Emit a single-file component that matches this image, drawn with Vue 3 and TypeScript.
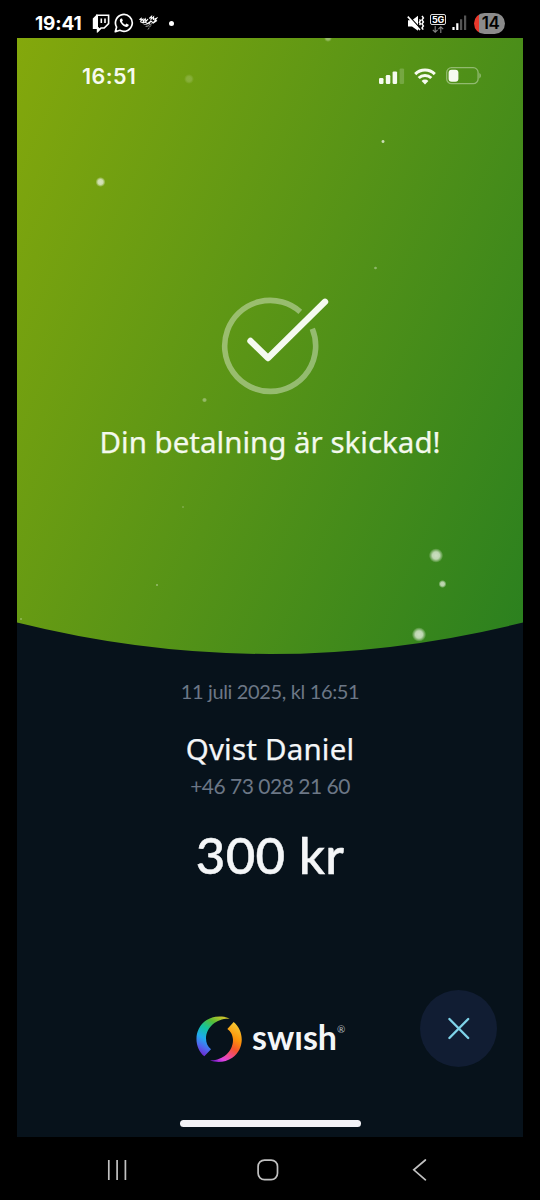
<script setup lang="ts">
interface Spark {
  x: number
  y: number
  r: number
  o: number
}

const sparks: Spark[] = [
  { x: 311, y: 0, r: 4, o: 0.4 },
  { x: 172, y: 41, r: 5, o: 0.2 },
  { x: 366, y: 103.5, r: 2, o: 0.8 },
  { x: 83.5, y: 144, r: 5, o: 0.8 },
  { x: 358.5, y: 230, r: 1.8, o: 0.4 },
  { x: 187.5, y: 362, r: 2.6, o: 0.4 },
  { x: 166, y: 469, r: 1.4, o: 0.2 },
  { x: 140, y: 547, r: 1.5, o: 0.35 },
  { x: 419, y: 517.5, r: 7.2, o: 0.8 },
  { x: 425.5, y: 546, r: 4, o: 0.75 },
  { x: 402, y: 596.5, r: 7.2, o: 0.8 },
  { x: 4, y: 581, r: 1.3, o: 0.3 },
]

const payment = {
  title: 'Din betalning är skickad!',
  date: '11 juli 2025, kl 16:51',
  name: 'Qvist Daniel',
  phone: '+46 73 028 21 60',
  amount: '300 kr',
}
</script>

<template>
  <div class="phone">
    <header class="device-bar">
      <span class="device-time">19:41</span>
      <svg class="twitch" width="18" height="19" viewBox="0 0 18 19" fill="none">
        <path d="M4.8 1.2H16.6V9.6L12.2 14H9L6 17V14H4.8Z" stroke="#fff" stroke-width="1.6" />
        <path d="M4.8 .5L.8 4.4V15H4.8V18.8L8.8 15L6 13.2V1Z" fill="#fff" />
        <path d="M9.3 4.4V9M13 4.4V9" stroke="#fff" stroke-width="1.6" />
      </svg>
      <svg class="whatsapp" width="20" height="20" viewBox="0 0 20 20" fill="none">
        <path d="M1.3 18.7L2.6 14.1A8.4 8.4 0 1 1 5.9 17.3Z" stroke="#fff" stroke-width="1.7" stroke-linejoin="round" />
        <path d="M7 5.4C5.4 6.2 5.6 8.2 6.7 9.8C8.3 12.2 10.2 13.8 12.2 14C13.7 14.1 14.8 13 14.7 11.7L12.5 10.5L11.3 11.8C9.8 11.2 8.8 10.2 8 8.8L8.9 7.6L8 5.5Z" fill="#fff" />
      </svg>
      <svg class="doodle" width="19" height="16" viewBox="0 0 19 16" fill="none" stroke="#fff" stroke-width="1.1" stroke-linecap="round">
        <path d="M.8 4.5L2.2 3.4L2 5.7L4 4L4.3 6.6L6.2 3.8L7 6.4L8.7 4.4M1.5 6.8L4.2 8L6 7L8.4 8.6L11.5 6.5M10.5 3.2L12.5 1.4L12 4.2L14.6 1.8L14.4 4.5L17.6 3.2L15.5 6.2L18 5.6L14.2 8L12 6L10 8.6" />
        <path d="M5 9.4L8 9.6M9.5 10.2L13 8.6M7 11.4L9.2 11M10.4 12.2L11.8 10.6M9.2 14.2L9.8 13.4" stroke="#aaa" stroke-width=".9" />
      </svg>
      <span class="more-dot"></span>
      <svg class="mute" width="18" height="17" viewBox="0 0 18 17">
        <path d="M1 5.2H5L11 .8V15.8L5 11.5H1Z" fill="#fff" />
        <path d="M1.6 .6L13.6 13.8" stroke="#000" stroke-width="1.3" />
        <path d="M.8 1.6L13 15" stroke="#fff" stroke-width="1.6" />
        <path d="M12.4 4.4L13.4 5.6L12.4 7.2L13.4 8.8L12.6 10.2M15 1L16.4 2.9L15 4.9L16.4 6.9L15 8.9L16.4 10.9L15 12.9L16.2 14.6" fill="none" stroke="#fff" stroke-width="1.5" />
      </svg>
      <span class="network">
        <span class="network-label">5G</span>
        <svg width="12" height="7" viewBox="0 0 12 7" fill="none" stroke="#858585" stroke-width="1.1">
          <path d="M3.2 0V6M.8 3.8L3.2 6.2L5.6 3.8M8.8 7V1M6.4 3.2L8.8 .8L11.2 3.2" />
        </svg>
      </span>
      <svg class="device-signal" width="15" height="16" viewBox="0 0 15 16">
        <path d="M.4 12H2.6V15H.4ZM4.2 8.2H6.4V15H4.2Z" fill="#fff" />
        <path d="M8 4.2H10.2V15H8ZM12 .4H14.2V15H12Z" fill="#555" />
      </svg>
      <span class="charge"><span class="charge-text">14</span></span>
    </header>

    <main class="screen">
      <section class="hero">
        <svg class="sparks" width="506" height="616" viewBox="0 0 506 616">
          <defs>
            <radialGradient id="spark">
              <stop offset="0" stop-color="#f1f5eb" />
              <stop offset=".5" stop-color="#f1f5eb" stop-opacity=".9" />
              <stop offset="1" stop-color="#f1f5eb" stop-opacity="0" />
            </radialGradient>
          </defs>
          <circle v-for="(s, i) in sparks" :key="i" :cx="s.x" :cy="s.y" :r="s.r" :opacity="s.o" fill="url(#spark)" />
        </svg>
        <div class="ios-bar">
          <span class="ios-time">16:51</span>
          <svg class="ios-signal" width="26" height="16" viewBox="0 0 26 16" fill="#f6faef">
            <rect x="0" y="10" width="4.5" height="6" rx="1.2" />
            <rect x="6.8" y="7" width="4.5" height="9" rx="1.2" />
            <rect x="13.6" y="3.4" width="4.5" height="12.6" rx="1.2" />
            <rect x="20.6" y=".4" width="4.5" height="15.6" rx="1.2" opacity=".2" />
          </svg>
          <svg class="wifi" width="22" height="17" viewBox="0 0 22 17" fill="none" stroke="#f6faef" stroke-width="3">
            <path d="M1.2 6.1A14 14 0 0 1 20.8 6.1" />
            <path d="M4.7 10A9 9 0 0 1 17.3 10" />
            <path d="M11 16.4L7.6 13A4.8 4.8 0 0 1 14.4 13Z" fill="#f6faef" stroke="none" />
          </svg>
          <svg class="ios-battery" width="36" height="18" viewBox="0 0 36 18">
            <rect x=".7" y=".7" width="31.4" height="16" rx="4.8" fill="none" stroke="#fff" stroke-opacity=".38" stroke-width="1.3" />
            <rect x="2.6" y="2.7" width="9.8" height="12" rx="3" fill="#f6faef" />
            <path d="M33.4 6C35.3 6.9 35.3 10.5 33.4 11.4Z" fill="#fff" opacity=".42" />
          </svg>
        </div>
        <svg class="check" width="120" height="100" viewBox="0 0 120 100" fill="none">
          <path d="M102.3 32.7A45.5 45.5 0 1 1 90.3 15.8" stroke="#fff" stroke-opacity=".38" stroke-width="5.6" />
          <path d="M40.5 45L58 62L115 5.8" stroke="#f5faf0" stroke-width="6.4" stroke-linecap="round" stroke-linejoin="round" />
        </svg>
        <h1 class="title">{{ payment.title }}</h1>
      </section>

      <section class="details">
        <p class="date">{{ payment.date }}</p>
        <h2 class="name">{{ payment.name }}</h2>
        <p class="number">{{ payment.phone }}</p>
        <p class="amount">{{ payment.amount }}</p>
      </section>

      <footer class="footer">
        <div class="brand">
          <svg width="46" height="47" viewBox="46 49 138 141">
            <defs>
              <linearGradient id="cool" x1=".75" y1="0" x2=".25" y2="1">
                <stop offset="0" stop-color="#c8c42c" />
                <stop offset=".2" stop-color="#58bd35" />
                <stop offset=".42" stop-color="#12c3a0" />
                <stop offset=".65" stop-color="#20a9ee" />
                <stop offset=".84" stop-color="#5065ed" />
                <stop offset="1" stop-color="#6c2bd0" />
              </linearGradient>
              <linearGradient id="warm" x1=".7" y1="0" x2=".2" y2="1">
                <stop offset="0" stop-color="#f6c630" />
                <stop offset=".3" stop-color="#fb930a" />
                <stop offset=".52" stop-color="#f5542b" />
                <stop offset=".72" stop-color="#f04a92" />
                <stop offset=".88" stop-color="#dd44e3" />
                <stop offset="1" stop-color="#8220c8" />
              </linearGradient>
            </defs>
            <path d="M71 170C38 142 39 86 78 61C100 48 128 48 147 57C110 55 77 80 76 116C76 130 81 141 91 149Z" fill="url(#cool)" />
            <path d="M159 67C192 95 192 148 155 174C135 188 108 190 88 182C122 184 157 158 157 121C157 107 150 95 140 88Z" fill="url(#warm)" />
          </svg>
          <span class="wordmark">swısh</span>
          <span class="registered">®</span>
        </div>
        <button class="close" aria-label="Stäng">
          <svg width="24" height="24" viewBox="0 0 24 24" fill="none" stroke="#7fd3e9" stroke-width="2.4" stroke-linecap="round">
            <path d="M2.4 2L21.2 21M21.2 2L2.4 21" />
          </svg>
        </button>
      </footer>
      <div class="home-indicator"></div>
    </main>

    <nav class="nav">
      <svg width="20" height="22" viewBox="0 0 20 22" stroke="#c2c2c2" stroke-width="1.7">
        <path d="M1.8 1V21M10.1 1V21M18.4 1V21" />
      </svg>
      <svg class="nav-home" width="22" height="22" viewBox="0 0 22 22" fill="none" stroke="#c2c2c2" stroke-width="1.7">
        <rect x="1.1" y="1.1" width="19.4" height="19.6" rx="6.4" />
      </svg>
      <svg width="15" height="22" viewBox="0 0 15 22" fill="none" stroke="#c2c2c2" stroke-width="1.7" stroke-linecap="round">
        <path d="M13.4 1L1.8 10.8L13.4 20.8" />
      </svg>
    </nav>
  </div>
</template>

<style>
body {
  margin: 0;
  background: #000;
}
</style>

<style scoped>
.phone {
  width: 540px;
  height: 1200px;
  background: #000;
  color: #f4f6f8;
  font-family: Lato, "Open Sans", sans-serif;
  overflow: hidden;
}
.phone svg {
  display: block;
  flex: none;
}
.device-bar {
  box-sizing: border-box;
  height: 38px;
  padding: 8px 35px 0;
  display: flex;
  align-items: center;
  color: #fff;
}
.device-time {
  width: 57px;
  padding-top: 1px;
  font: 700 19px/30px Inter, sans-serif;
  letter-spacing: -0.1px;
}
.whatsapp {
  margin-left: 4px;
}
.doodle {
  margin-left: 5px;
}
.more-dot {
  width: 5px;
  height: 5px;
  margin-left: 11px;
  border-radius: 50%;
  background: #fff;
}
.mute {
  margin-left: auto;
}
.network {
  display: flex;
  flex-direction: column;
  align-items: center;
  gap: 1px;
  margin-left: 5px;
}
.network-label {
  box-sizing: border-box;
  width: 16px;
  height: 11px;
  border: 1px solid #ddd;
  border-radius: 2px;
  font: 700 9px/9px Inter, sans-serif;
  text-align: center;
  letter-spacing: -0.2px;
}
.device-signal {
  margin-left: 6px;
}
.charge {
  width: 31px;
  height: 21px;
  margin-left: 7px;
  border-radius: 10.5px;
  background: linear-gradient(90deg, #e8392c 4.5px, #8b8b8b 4.5px);
  text-align: center;
}
.charge-text {
  padding-left: 2px;
  color: #000;
  font: 600 17px/21px Inter, sans-serif;
  letter-spacing: -0.6px;
}
.screen {
  width: 506px;
  height: 1099px;
  margin: 0 auto;
  display: flex;
  flex-direction: column;
  background: #07121b;
}
.hero {
  position: relative;
  height: 616px;
  display: flex;
  flex-direction: column;
  align-items: center;
  background: linear-gradient(114deg, #84a80c, #569317 52%, #2a801f);
  clip-path: path("M0 0H506V584.5Q253 647.5 0 584.5Z");
}
.sparks {
  position: absolute;
  inset: 0;
}
.ios-bar {
  box-sizing: border-box;
  width: 100%;
  height: 24px;
  margin-top: 26px;
  padding: 0 41px 0 65px;
  display: flex;
  align-items: center;
}
.ios-time {
  font: 600 21.5px/24px Inter, sans-serif;
  letter-spacing: 0.4px;
  color: #f6faef;
}
.ios-signal {
  margin-left: auto;
}
.wifi {
  margin-left: 9px;
}
.ios-battery {
  margin-left: 10px;
}
.check {
  margin-top: 208px;
}
.title {
  margin: 28px 0 0;
  font-family: "Noto Sans", sans-serif;
  font-size: 29.5px;
  font-weight: 400;
  line-height: 36px;
  white-space: nowrap;
  color: #f3f9ed;
  -webkit-text-stroke: 0.25px #f3f9ed;
}
.details {
  height: 300px;
  display: flex;
  flex-direction: column;
  align-items: center;
  padding-top: 23px;
  white-space: nowrap;
}
.details p,
.details h2 {
  margin: 0;
  font-weight: 400;
}
.date,
.number {
  color: #6c7786;
}
.details .date {
  font-size: 20px;
  line-height: 28px;
  letter-spacing: -0.35px;
}
.details .name {
  margin-top: 26px;
  font-family: "Noto Sans", sans-serif;
  font-size: 29.5px;
  line-height: 36px;
  letter-spacing: 0.2px;
  -webkit-text-stroke: 0.25px #f4f6f8;
}
.details .number {
  margin-top: 5px;
  font-size: 21px;
  line-height: 28px;
  letter-spacing: -0.5px;
}
.details .amount {
  margin-top: 24px;
  font-size: 51px;
  font-weight: 500;
  line-height: 62px;
  letter-spacing: 0.3px;
  -webkit-text-stroke: 0.5px #f4f6f8;
}
.footer {
  height: 77px;
  margin-top: 13px;
  padding: 0 26px 0 179px;
  display: flex;
  justify-content: space-between;
}
.brand {
  display: flex;
  align-items: flex-start;
  padding-top: 26px;
}
.wordmark {
  margin: 1px 0 0 10px;
  font-size: 34px;
  font-weight: 700;
  line-height: 40px;
}
.registered {
  margin-top: 7px;
  font-size: 10px;
  line-height: 12px;
  color: #b4babf;
}
.close {
  width: 77px;
  height: 77px;
  padding: 0;
  border: 0;
  border-radius: 50%;
  display: grid;
  place-items: center;
  background: #111d33;
}
.home-indicator {
  width: 181px;
  height: 7px;
  margin: 53px auto 0;
  border-radius: 4px;
  background: #f3f3f7;
}
.nav {
  height: 63px;
  padding: 22px 113px 0 107px;
  display: flex;
  justify-content: space-between;
  box-sizing: border-box;
}
.nav-home {
  margin-right: 4px;
}
</style>
